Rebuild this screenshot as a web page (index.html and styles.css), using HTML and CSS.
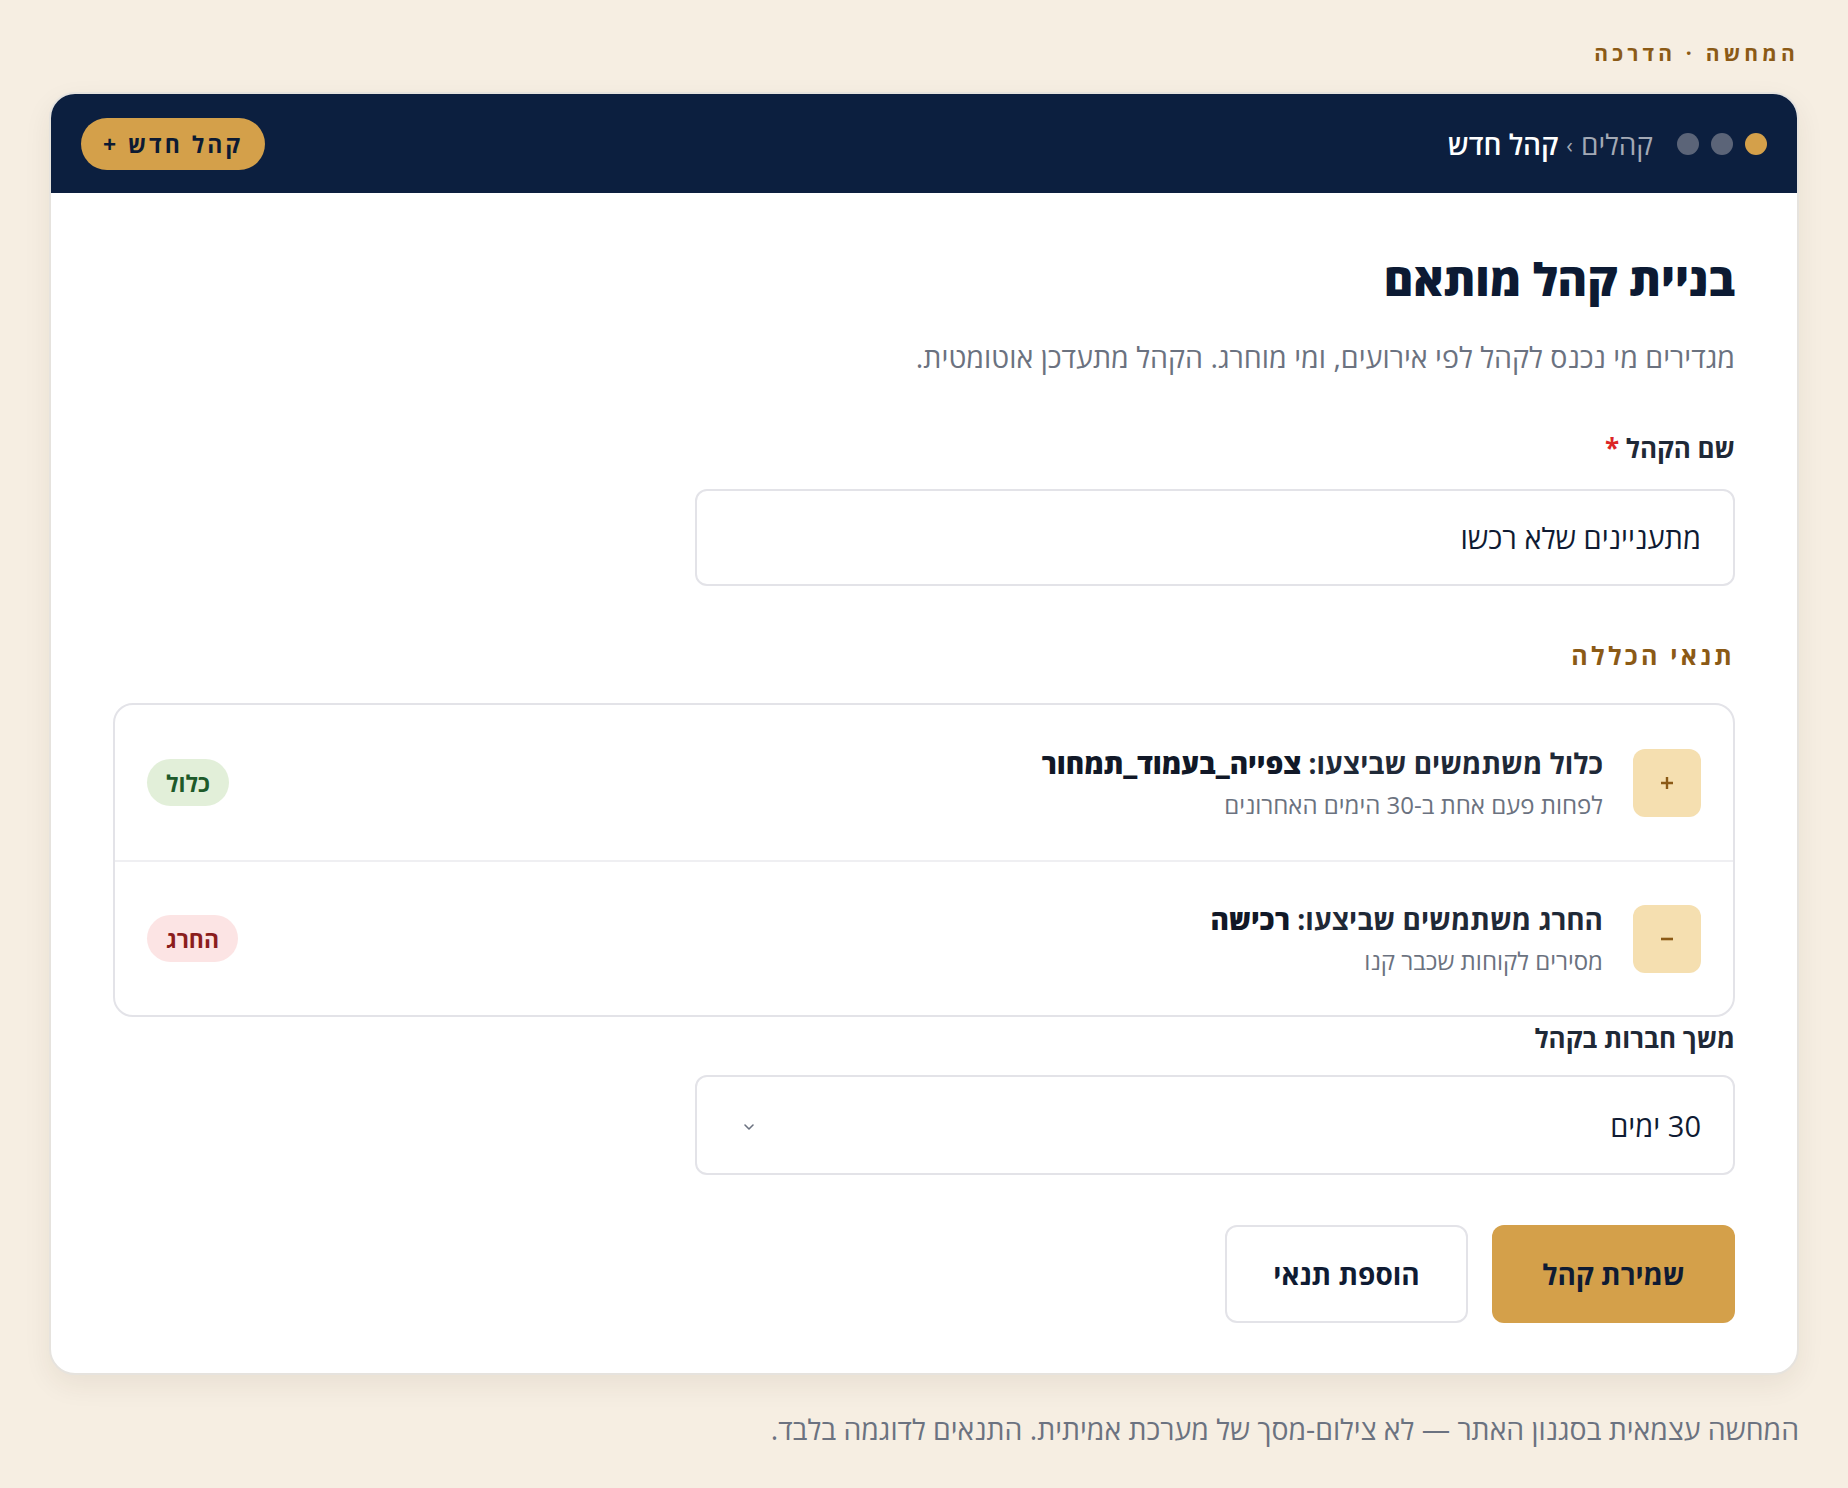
FILE: index.html
```html
<!DOCTYPE html>
<html lang="he" dir="rtl">
<head>
<meta charset="utf-8">
<title>בניית קהל מותאם</title>
<link rel="stylesheet" href="styles.css">
</head>
<body>
<div class="page">
  <div class="eyebrow">המחשה · הדרכה</div>
  <div class="card">
    <header class="topbar">
      <div class="topbar-start">
        <div class="dots">
          <span class="dot dot-gold"></span>
          <span class="dot"></span>
          <span class="dot"></span>
        </div>
        <div class="crumbs">
          <span class="crumb-muted">קהלים</span>
          <span class="crumb-sep">›</span>
          <span class="crumb-current">קהל חדש</span>
        </div>
      </div>
      <button class="new-btn">קהל חדש +</button>
    </header>

    <main class="content">
      <h1 class="title">בניית קהל מותאם</h1>
      <p class="lead">מגדירים מי נכנס לקהל לפי אירועים, ומי מוחרג. הקהל מתעדכן אוטומטית.</p>

      <label class="field-label">שם הקהל <span class="req">*</span></label>
      <div class="input">מתעניינים שלא רכשו</div>

      <h2 class="section-title">תנאי הכללה</h2>

      <div class="rules">
        <div class="rule">
          <div class="rule-icon">
            <svg width="14" height="14" viewBox="0 0 14 14"><path d="M7 1v12M1 7h12" stroke="#8b5a16" stroke-width="2.4" fill="none"/></svg>
          </div>
          <div class="rule-text">
            <div class="rule-title">כלול משתמשים שביצעו: <strong>צפייה_בעמוד_תמחור</strong></div>
            <div class="rule-sub">לפחות פעם אחת ב-30 הימים האחרונים</div>
          </div>
          <span class="badge badge-in">כלול</span>
        </div>
        <div class="rule">
          <div class="rule-icon">
            <svg width="14" height="14" viewBox="0 0 14 14"><path d="M1 7h12" stroke="#8b5a16" stroke-width="2.6" fill="none"/></svg>
          </div>
          <div class="rule-text">
            <div class="rule-title">החרג משתמשים שביצעו: <strong>רכישה</strong></div>
            <div class="rule-sub">מסירים לקוחות שכבר קנו</div>
          </div>
          <span class="badge badge-out">החרג</span>
        </div>
      </div>

      <label class="field-label field-label-tight">משך חברות בקהל</label>
      <div class="input select">
        <span>30 ימים</span>
        <svg class="chev" width="12" height="8" viewBox="0 0 12 8"><path d="M2 2l4 4 4-4" stroke="#6b7280" stroke-width="1.6" fill="none" stroke-linecap="round" stroke-linejoin="round"/></svg>
      </div>

      <div class="actions">
        <button class="btn btn-primary">שמירת קהל</button>
        <button class="btn btn-secondary">הוספת תנאי</button>
      </div>
    </main>
  </div>
  <p class="footnote">המחשה עצמאית בסגנון האתר — לא צילום-מסך של מערכת אמיתית. התנאים לדוגמה בלבד.</p>
</div>
</body>
</html>
```
FILE: styles.css
```css
* { box-sizing: border-box; }
html, body { margin: 0; padding: 0; }
body {
  background: #f6eee2;
  font-family: "Open Sans", Roboto, sans-serif;
  color: #0f1b33;
}
.page {
  padding: 40px 49px 40px 49px;
}
.eyebrow {
  font-size: 21px;
  line-height: 26px;
  font-weight: 700;
  letter-spacing: 0.2em;
  color: #8b5a16;
  margin-bottom: 26px;
}
.card {
  background: #fff;
  border: 2px solid #e6e3de;
  border-radius: 26px;
  overflow: hidden;
  box-shadow: 0 10px 28px rgba(60, 40, 10, 0.07);
}
.topbar {
  background: #0c1f3f;
  height: 99px;
  display: flex;
  align-items: center;
  justify-content: space-between;
  padding: 0 30px;
}
.topbar-start {
  display: flex;
  align-items: center;
  gap: 24px;
}
.dots { display: flex; gap: 12px; }
.dot {
  width: 22px; height: 22px; border-radius: 50%;
  background: #5b6478;
}
.dot-gold { background: #d4a04a; }
.crumbs {
  display: flex; align-items: center; gap: 8px;
  font-size: 28px;
  line-height: 36px;
}
.crumb-muted { color: #a3a9b5; }
.crumb-sep { color: #a3a9b5; font-size: 22px; }
.crumb-current { color: #fff; font-weight: 600; }
.new-btn {
  font-family: inherit;
  background: #d4a04a;
  color: #0c1a33;
  border: 0;
  border-radius: 999px;
  height: 52px;
  padding: 0 22px;
  font-size: 23px;
  font-weight: 700;
  letter-spacing: 0.13em;
}
.content {
  padding: 60px 62px 50px;
}
.title {
  margin: 0;
  font-size: 45px;
  line-height: 52px;
  font-weight: 800;
  color: #0c1a33;
}
.lead {
  margin: 34px 0 0;
  font-size: 28.6px;
  line-height: 36px;
  color: #6b7280;
}
.field-label {
  display: block;
  margin-top: 56px;
  font-size: 26px;
  line-height: 34px;
  font-weight: 700;
  color: #1f2937;
}
.field-label-tight { margin-top: 4px; }
.req { color: #dc2626; }
.input {
  margin-top: 24px;
  width: 1040px;
  height: 97px;
  border: 2px solid #e3e3e8;
  border-radius: 12px;
  display: flex;
  align-items: center;
  padding: 0 32px;
  font-size: 29px;
  color: #0f1b33;
}
.select {
  margin-top: 20px;
  height: 100px;
  justify-content: space-between;
  padding: 0 32px 0 46px;
}
.chev { margin-top: 4px; }
.section-title {
  margin: 53px 0 0;
  font-size: 25px;
  line-height: 32px;
  font-weight: 700;
  letter-spacing: 0.13em;
  color: #8b5a16;
}
.rules {
  margin-top: 32px;
  border: 2px solid #e3e3e8;
  border-radius: 20px;
}
.rule {
  display: flex;
  align-items: center;
  gap: 30px;
  padding: 38px 32px;
  min-height: 155px;
}
.rule + .rule { border-top: 2px solid #efeff2; }
.rule-icon {
  width: 68px; height: 68px;
  border-radius: 12px;
  background: #f5dfb0;
  display: flex; align-items: center; justify-content: center;
  flex: none;
}
.rule-text { flex: 1; }
.rule-title {
  font-size: 28px;
  line-height: 36px;
  font-weight: 700;
  color: #1f2937;
}
.rule-title strong { font-weight: 800; color: #111827; }
.rule-sub {
  margin-top: 8px;
  font-size: 24px;
  line-height: 32px;
  color: #6b7280;
}
.badge {
  flex: none;
  height: 47px;
  padding: 0 19px;
  border-radius: 999px;
  display: flex; align-items: center;
  font-size: 23px;
  font-weight: 700;
}
.badge-in { background: #e2efd9; color: #1e5a2a; }
.badge-out { background: #fce4e4; color: #8b1d1d; }
.actions {
  margin-top: 50px;
  display: flex;
  gap: 24px;
}
.btn {
  font-family: inherit;
  height: 98px;
  width: 243px;
  border-radius: 12px;
  font-size: 28px;
  font-weight: 700;
  color: #0f1b33;
}
.btn-primary { background: #d4a04a; border: 0; }
.btn-secondary { background: #fff; border: 2px solid #e3e3e8; }
.footnote {
  margin: 36px 0 0;
  font-size: 28.4px;
  line-height: 36px;
  color: #6b7280;
}
```
